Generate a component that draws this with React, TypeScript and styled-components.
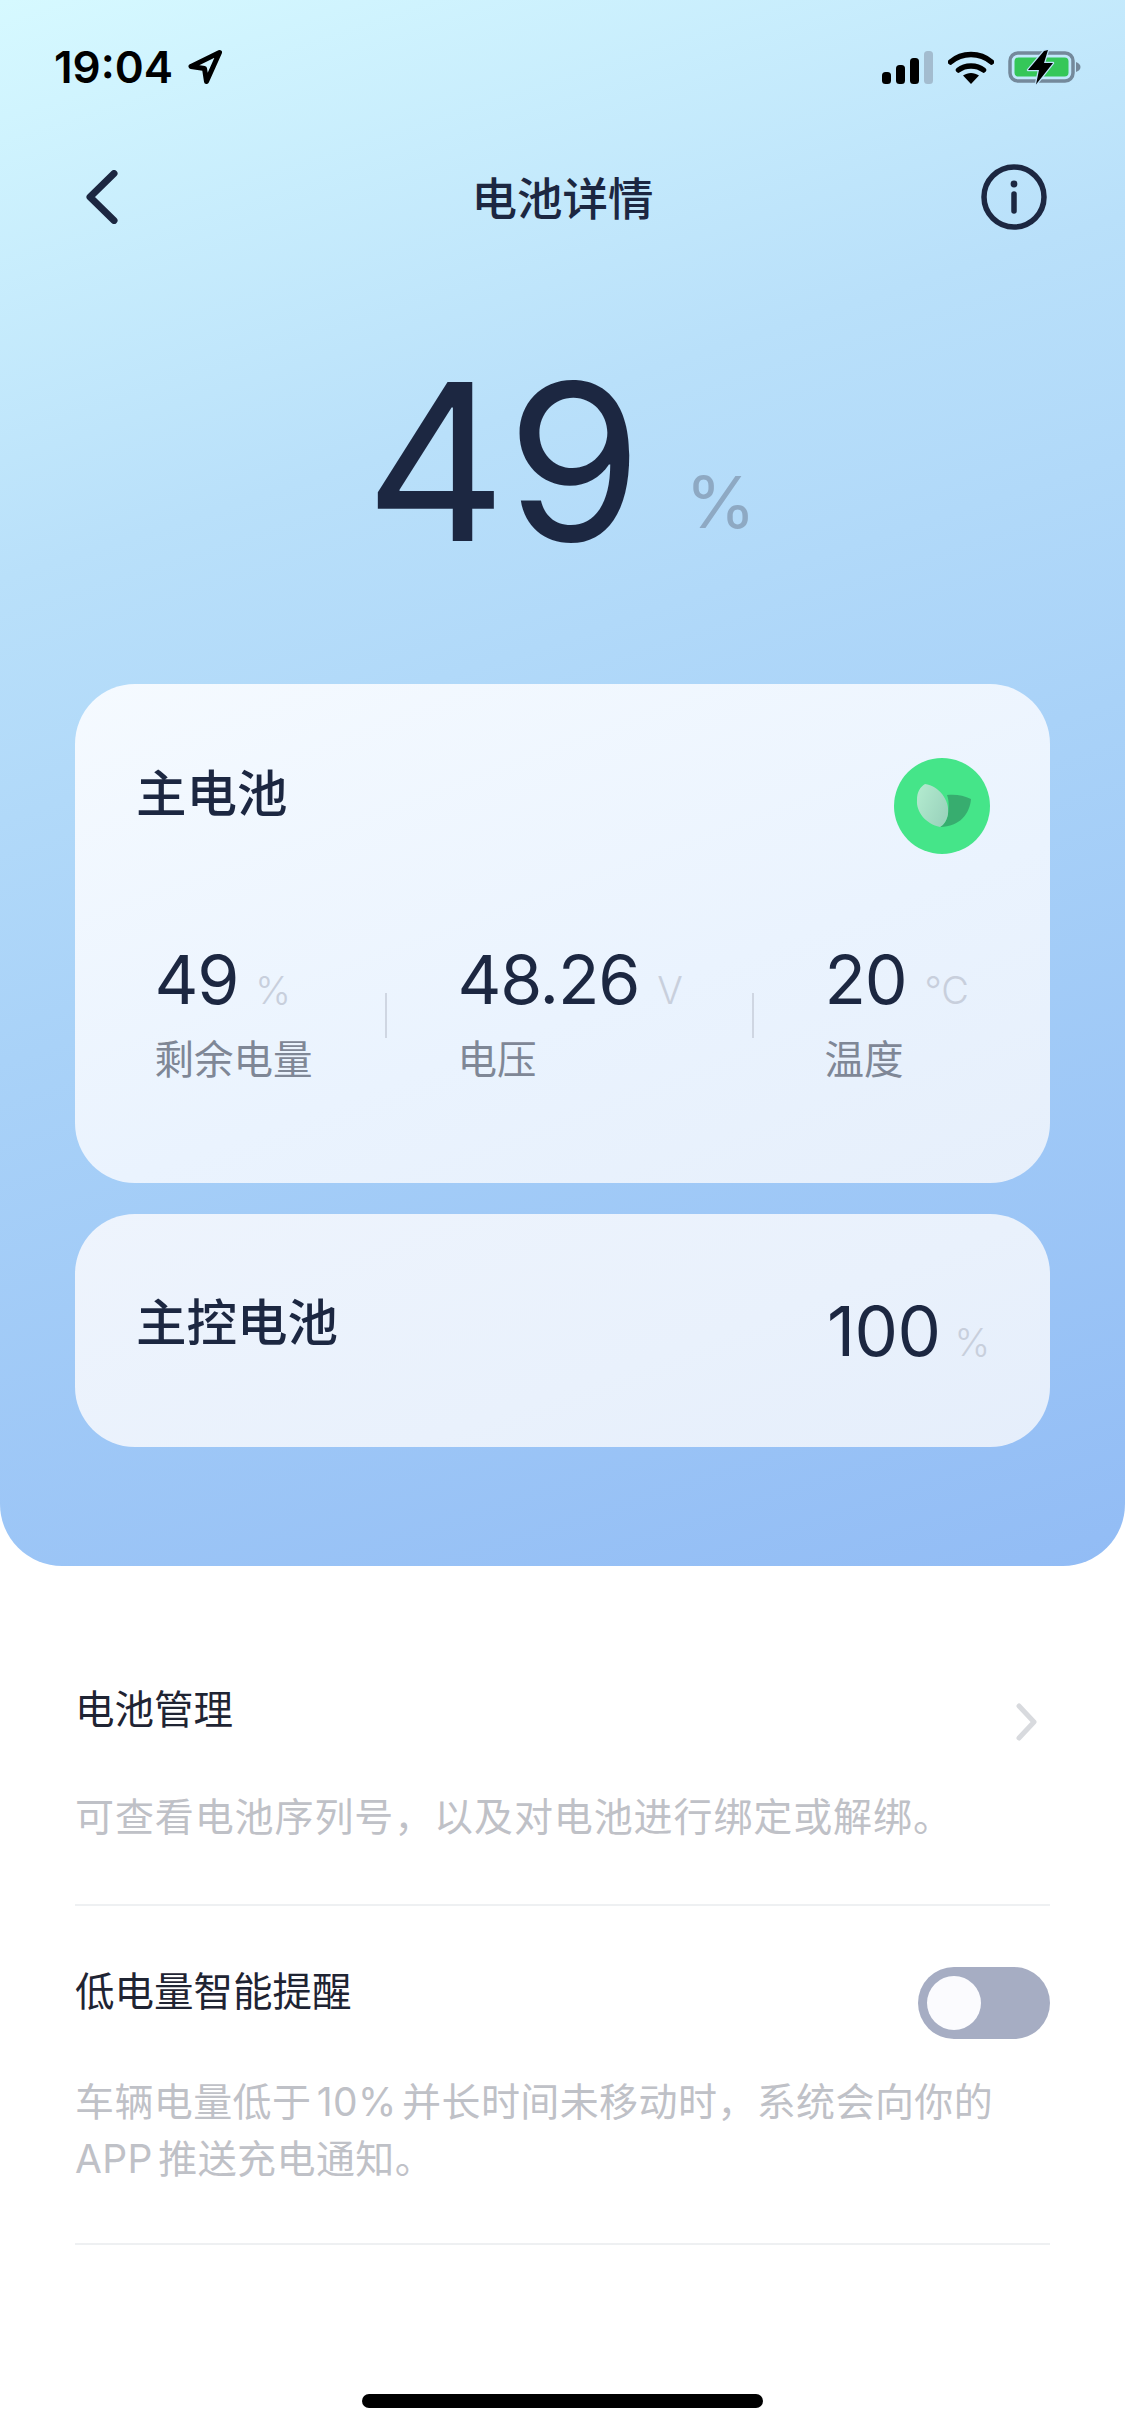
import React from 'react';
import styled, { createGlobalStyle } from 'styled-components';

const CJK = `Inter, "Noto Sans CJK SC", sans-serif`;
const INK = '#1c2741';

const GlobalStyle = createGlobalStyle`
  html, body {
    margin: 0;
    padding: 0;
    background: #fff;
  }
  * {
    box-sizing: border-box;
  }
`;

const Page = styled.div`
  width: 1125px;
  height: 2436px;
  overflow: hidden;
  position: relative;
  background: #fff;
  font-family: ${CJK};
  color: ${INK};
`;

const Hero = styled.section`
  height: 1566px;
  padding: 0 75px;
  border-radius: 0 0 62px 62px;
  background: linear-gradient(162deg, #d6f9ff 0%, #b9e0fa 30%, #a9d2f8 55%, #92bcf5 100%);
`;

const StatusBar = styled.div`
  height: 86px;
  margin: 0 -75px;
  padding: 48px 43px 0 54px;
  display: flex;
  justify-content: space-between;
  align-items: center;
`;

const StatusLeft = styled.div`
  display: flex;
  align-items: center;
  gap: 14px;
`;

const Time = styled.span`
  font-family: Inter, sans-serif;
  font-weight: 600;
  font-size: 44px;
  line-height: 38px;
  color: #000;
`;

const StatusRight = styled.div`
  display: flex;
  align-items: center;
  gap: 14px;
`;

const NavBar = styled.header`
  height: 110px;
  margin-top: 56px;
  display: grid;
  grid-template-columns: 1fr auto 1fr;
  align-items: center;
`;

const NavLeft = styled.div`
  display: flex;
  padding-left: 10px;
`;

const NavRight = styled.div`
  display: flex;
  justify-content: flex-end;
  padding-right: 3px;
`;

const NavTitle = styled.h1`
  margin: 5px 0 0;
  font-size: 45.5px;
  font-weight: 500;
  line-height: 60px;
  color: ${INK};
`;

const BigRow = styled.div`
  height: 432px;
  padding: 0 0 0 290px;
  display: flex;
  align-items: flex-start;
`;

const BigValue = styled.span`
  font-family: Inter, sans-serif;
  font-weight: 400;
  font-size: 219px;
  line-height: 232px;
  margin-top: 94px;
  color: ${INK};
`;

const BigUnit = styled.span`
  font-family: Inter, sans-serif;
  font-weight: 400;
  font-size: 72px;
  line-height: 84px;
  margin: 208px 0 0 43px;
  color: #8ea9c3;
`;

const Card = styled.div`
  border-radius: 60px;
  background: linear-gradient(160deg, #f5faff 0%, #eaf3fe 60%, #e6effb 100%);
`;

const MainCard = styled(Card)`
  height: 499px;
  padding: 73px 60px 0 61px;
`;

const CardHead = styled.div`
  display: flex;
  justify-content: space-between;
  align-items: flex-start;
`;

const CardTitle = styled.h2`
  margin: 2px 0 0;
  font-size: 50.5px;
  font-weight: 500;
  line-height: 70px;
  color: ${INK};
`;

const Leaf = styled.svg`
  margin-top: 1px;
`;

const StatRow = styled.div`
  margin-top: 86px;
  display: grid;
  grid-template-columns: 303px 367px 1fr;
  padding-left: 18.5px;
`;

const Stat = styled.div<{ $divided?: boolean }>`
  position: relative;
  &::after {
    content: '';
    display: ${p => (p.$divided ? 'block' : 'none')};
    position: absolute;
    right: 71px;
    top: 53px;
    width: 2px;
    height: 45px;
    background: #cfd6e2;
  }
`;

const ValueLine = styled.div`
  display: flex;
  align-items: baseline;
  height: 78px;
`;

const Value = styled.span`
  font-family: Inter, sans-serif;
  font-size: 68px;
  line-height: 78px;
  font-weight: 400;
  letter-spacing: -1.2px;
  color: ${INK};
`;

const Unit = styled.span<{ $gap: number }>`
  font-family: Inter, sans-serif;
  font-size: 38px;
  font-weight: 300;
  color: #c8cfdc;
  margin-left: ${p => p.$gap}px;
`;

const StatLabel = styled.div`
  margin-top: 15px;
  font-size: 39.5px;
  line-height: 54px;
  font-weight: 400;
  color: #7f8796;
`;

const SubCard = styled(Card)`
  margin-top: 31px;
  height: 233px;
  padding: 0 60px 0 61px;
  display: flex;
  justify-content: space-between;
  align-items: center;
  background: linear-gradient(160deg, #eef4fd 0%, #e9f1fc 60%, #e5eefb 100%);
`;

const SubValue = styled.div`
  display: flex;
  align-items: baseline;
`;

const SubTitle = styled(CardTitle)`
  margin: -16px 0 0;
`;

const SubNumber = styled(Value)`
  font-size: 69px;
  letter-spacing: -0.6px;
`;

const List = styled.section`
  padding: 112px 75px 0;
`;

const ListItem = styled.div<{ $h: number }>`
  height: ${p => p.$h}px;
  border-bottom: 2px solid #eef0f2;
  margin-bottom: 57px;
`;

const ItemHead = styled.div`
  height: 64px;
  display: flex;
  align-items: flex-start;
  justify-content: space-between;
`;

const ItemTitle = styled.div<{ $shift?: number }>`
  font-size: 39.5px;
  line-height: 64px;
  font-weight: 400;
  margin-top: ${p => p.$shift ?? 0}px;
  color: #1f2433;
`;

const Chevron = styled.svg`
  margin: 25px 12px 0 0;
`;

const Toggle = styled.div`
  width: 132px;
  height: 72px;
  margin-top: 4px;
  border-radius: 36px;
  background: #a6adc3;
  padding: 9px;
`;

const Knob = styled.div`
  width: 54px;
  height: 54px;
  border-radius: 50%;
  background: #fbfbfe;
`;

const ItemDesc = styled.p<{ $spacing: number }>`
  margin: 46px 0 0;
  font-size: 39px;
  line-height: 57px;
  font-weight: 400;
  letter-spacing: ${p => p.$spacing}px;
  word-spacing: -6px;
  color: #bfc1c7;
`;

const HomeBar = styled.div`
  position: absolute;
  left: 362px;
  bottom: 28px;
  width: 401px;
  height: 14px;
  border-radius: 7px;
  background: #000;
`;

const LocationIcon = () => (
  <svg width="36" height="36" viewBox="0 0 36 36" fill="none">
    <path d="M32.5 3.5 L4 17.5 L17.5 19.5 L19.5 32.5 Z" stroke="#000" strokeWidth="5" strokeLinejoin="round" />
  </svg>
);

const SignalIcon = () => (
  <svg width="52" height="33" viewBox="0 0 52 33">
    <rect x="0" y="21" width="9" height="12" rx="3.5" fill="#000" />
    <rect x="14" y="14" width="9" height="19" rx="3.5" fill="#000" />
    <rect x="28" y="7" width="9" height="26" rx="3.5" fill="#000" />
    <rect x="42" y="0" width="9" height="33" rx="3.5" fill="#a3bccf" />
  </svg>
);

const WifiIcon = () => (
  <svg width="46" height="33" viewBox="0 0 46 33" fill="none">
    <path d="M2.5 11 C14 1 32 1 43.5 11" stroke="#000" strokeWidth="5.5" strokeLinecap="round" />
    <path d="M10.5 19 C17 13.5 29 13.5 35.5 19" stroke="#000" strokeWidth="5.5" strokeLinecap="round" />
    <path d="M15 24.5 C20 21 26 21 31 24.5 L23 33 Z" fill="#000" />
  </svg>
);

const BatteryIcon = () => (
  <svg width="74" height="36" viewBox="0 0 74 36" fill="none">
    <rect x="2" y="4" width="63" height="28" rx="8" stroke="#74899b" strokeWidth="3.5" />
    <rect x="6.5" y="8.5" width="54" height="19" rx="4" fill="#35c759" />
    <path d="M68 13 C71 14 72.5 16 72.5 18 C72.5 20 71 22 68 23 Z" fill="#74899b" />
    <path d="M36 2 L40 1 L36 14 L45 14 L28 35.5 L31 21 L20 21 Z" fill="#000" stroke="#bde3fb" strokeWidth="2.5" strokeLinejoin="round" paintOrder="stroke" />
  </svg>
);

const BackIcon = () => (
  <svg width="34" height="54" viewBox="0 0 34 54" fill="none">
    <path d="M29 3.5 L5 27 L29 50.5" stroke={INK} strokeWidth="7" strokeLinecap="round" strokeLinejoin="round" />
  </svg>
);

const InfoIcon = () => (
  <svg width="66" height="66" viewBox="0 0 66 66" fill="none">
    <circle cx="33" cy="33" r="30" stroke={INK} strokeWidth="5.5" />
    <circle cx="33" cy="20" r="3.4" fill={INK} />
    <path d="M33 30 V47" stroke={INK} strokeWidth="5.5" strokeLinecap="round" />
  </svg>
);

const LeafBadge = () => (
  <Leaf width="96" height="96" viewBox="0 0 96 96">
    <defs>
      <linearGradient id="leafLight" x1="0" y1="0" x2="1" y2="0.6">
        <stop offset="0" stopColor="#b4ecd0" />
        <stop offset="1" stopColor="#9bd4bd" />
      </linearGradient>
    </defs>
    <circle cx="48" cy="48" r="48" fill="#45e589" />
    <path d="M53 37 C60 36 70 37 77 41 C76 55 66 69 46 69 C50 67 53 62 54 56 C55 48 55 42 53 37 Z" fill="#37ad6f" />
    <path d="M31 26 C45 28 56 42 54 56 C53 62 50 67 46 69 C32 66 22 54 23 42 C23 34 26 29 31 26 Z" fill="url(#leafLight)" />
  </Leaf>
);

const ChevronRight = () => (
  <Chevron width="22" height="38" viewBox="0 0 22 38" fill="none">
    <path d="M3 3 L18 19 L3 35" stroke="#d8dade" strokeWidth="5" strokeLinecap="round" strokeLinejoin="round" />
  </Chevron>
);

const stats = [
  { value: '49', unit: '%', label: '剩余电量', gap: 17 },
  { value: '48.26', unit: 'V', label: '电压', gap: 18 },
  { value: '20', unit: '°C', label: '温度', gap: 18 },
];

export default function App() {
  return (
    <Page>
      <GlobalStyle />
      <Hero>
        <StatusBar>
          <StatusLeft>
            <Time>19:04</Time>
            <LocationIcon />
          </StatusLeft>
          <StatusRight>
            <SignalIcon />
            <WifiIcon />
            <BatteryIcon />
          </StatusRight>
        </StatusBar>
        <NavBar>
          <NavLeft>
            <BackIcon />
          </NavLeft>
          <NavTitle>电池详情</NavTitle>
          <NavRight>
            <InfoIcon />
          </NavRight>
        </NavBar>
        <BigRow>
          <BigValue>49</BigValue>
          <BigUnit>%</BigUnit>
        </BigRow>
        <MainCard>
          <CardHead>
            <CardTitle>主电池</CardTitle>
            <LeafBadge />
          </CardHead>
          <StatRow>
            {stats.map((s, i) => (
              <Stat key={s.label} $divided={i < 2}>
                <ValueLine>
                  <Value>{s.value}</Value>
                  <Unit $gap={s.gap}>{s.unit}</Unit>
                </ValueLine>
                <StatLabel>{s.label}</StatLabel>
              </Stat>
            ))}
          </StatRow>
        </MainCard>
        <SubCard>
          <SubTitle>主控电池</SubTitle>
          <SubValue>
            <SubNumber>100</SubNumber>
            <Unit $gap={14}>%</Unit>
          </SubValue>
        </SubCard>
      </Hero>
      <List>
        <ListItem $h={228}>
          <ItemHead>
            <ItemTitle>电池管理</ItemTitle>
            <ChevronRight />
          </ItemHead>
          <ItemDesc $spacing={0.9}>可查看电池序列号，以及对电池进行绑定或解绑。</ItemDesc>
        </ListItem>
        <ListItem $h={282}>
          <ItemHead>
            <ItemTitle $shift={-3}>低电量智能提醒</ItemTitle>
            <Toggle>
              <Knob />
            </Toggle>
          </ItemHead>
          <ItemDesc $spacing={0.4}>车辆电量低于 10% 并长时间未移动时，系统会向你的 APP 推送充电通知。</ItemDesc>
        </ListItem>
      </List>
      <HomeBar />
    </Page>
  );
}
